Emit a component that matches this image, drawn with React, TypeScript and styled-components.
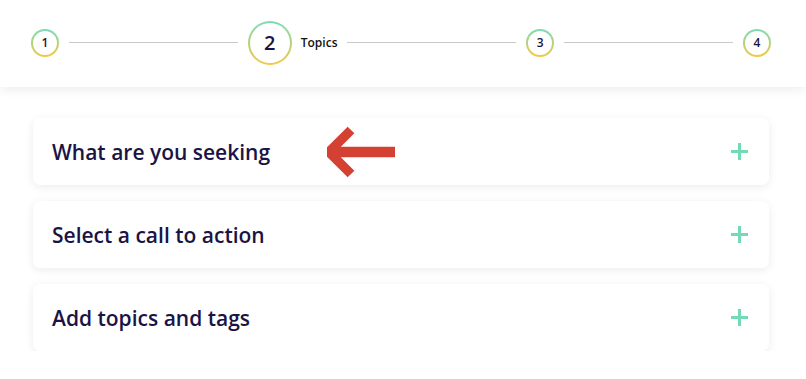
import React from "react";
import styled, { createGlobalStyle } from "styled-components";

const GlobalStyle = createGlobalStyle`
  html, body { margin: 0; padding: 0; background: #ffffff; }
  body { font-family: "Open Sans", "Noto Sans", sans-serif; color: #1a1446; }
  * { box-sizing: border-box; }
`;

const Header = styled.header`
  height: 87px;
  background: #ffffff;
  box-shadow: 0 3px 10px rgba(0, 0, 0, 0.07);
  display: flex;
  align-items: center;
  padding: 0 35px 2px 31px;
  position: relative;
  z-index: 1;
`;

const Stepper = styled.div`
  flex: 1;
  display: flex;
  align-items: center;
  gap: 10px;
`;

const Circle = styled.div<{ $big?: boolean }>`
  width: ${(p) => (p.$big ? 44 : 28)}px;
  height: ${(p) => (p.$big ? 44 : 28)}px;
  flex: none;
  border-radius: 50%;
  border: 2px solid transparent;
  background: linear-gradient(#fff, #fff) padding-box,
    linear-gradient(to bottom, #79dcb6, #f5c842) border-box;
  display: flex;
  align-items: center;
  justify-content: center;
  font-size: ${(p) => (p.$big ? 20 : 12)}px;
  font-weight: 600;
  color: #1a1446;
`;

const StepLabel = styled.span`
  font-size: 12px;
  font-weight: 600;
  color: #111;
  margin-left: -1px;
`;

const Line = styled.div`
  flex: 1;
  height: 1px;
  background: #c9c9c9;
`;

const Main = styled.main`
  padding: 31px 37px 0 33px;
  display: flex;
  flex-direction: column;
  gap: 16px;
`;

const Card = styled.div`
  position: relative;
  height: 67px;
  background: #fff;
  border-radius: 7px;
  box-shadow: 0 2px 10px rgba(0, 0, 0, 0.08);
  display: flex;
  align-items: center;
  justify-content: space-between;
  padding: 0 20px 0 19px;
`;

const Title = styled.h3`
  margin: 0;
  font-size: 21px;
  font-weight: 600;
  color: #1a1446;
`;

const PlusIcon = styled.svg`
  width: 19px;
  height: 19px;
  flex: none;
`;

const Arrow = styled.svg`
  position: absolute;
  left: 294px;
  top: 8px;
  width: 70px;
  height: 52px;
`;

const Plus = () => (
  <PlusIcon viewBox="0 0 19 19">
    <path d="M9.5 1v17M1 9.5h17" stroke="#72dbb5" strokeWidth="3" />
  </PlusIcon>
);

const steps = [
  { n: 1 },
  { n: 2, label: "Topics", big: true },
  { n: 3 },
  { n: 4 },
];

const sections = ["What are you seeking", "Select a call to action", "Add topics and tags"];

export default function App() {
  return (
    <>
      <GlobalStyle />
      <Header>
        <Stepper>
          {steps.map((s, i) => (
            <React.Fragment key={s.n}>
              {i > 0 && <Line />}
              <Circle $big={s.big}>{s.n}</Circle>
              {s.label && <StepLabel>{s.label}</StepLabel>}
            </React.Fragment>
          ))}
        </Stepper>
      </Header>
      <Main>
        {sections.map((t, i) => (
          <Card key={t}>
            <Title>{t}</Title>
            <Plus />
            {i === 0 && (
              <Arrow viewBox="0 0 70 52">
                <path d="M24 4 L2 26 L24 48" fill="none" stroke="#d44133" strokeWidth="9.5" strokeLinejoin="miter" strokeMiterlimit="4" />
                <path d="M6 26 H68" stroke="#d44133" strokeWidth="10.5" />
              </Arrow>
            )}
          </Card>
        ))}
      </Main>
    </>
  );
}
